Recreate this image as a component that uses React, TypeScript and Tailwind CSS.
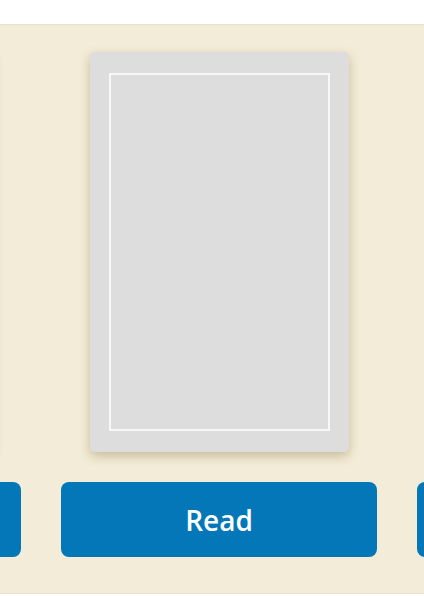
const slides = ["Prev", "Read", "Next"];

function BookSlide({ label }: { label: string }) {
  return (
    <div className="flex w-[316px] shrink-0 flex-col items-center">
      <div className="h-[400px] w-[259px] rounded-[5px] bg-[#dddddd] px-[19px] py-[21px] shadow-[0_4px_11px_rgba(110,85,20,0.32)]">
        <div className="h-full w-full border-2 border-[#f7f7f7]" />
      </div>
      <button
        className="mt-[30px] h-[75px] w-full rounded-[8px] bg-[#0377b7] text-[28px] font-semibold text-white"
        style={{ fontFamily: '"Open Sans", "Noto Sans", sans-serif' }}
      >
        {label === "Read" ? "Read" : ""}
      </button>
    </div>
  );
}

export default function App() {
  return (
    <div className="h-[596px] w-[424px] bg-white pt-6">
      <section className="overflow-hidden border-y border-[#e9e2cc] bg-[#f3ecd8] pt-[27px] pb-[36px]">
        <div className="ml-[-295px] flex gap-10">
          {slides.map((s) => (
            <BookSlide key={s} label={s} />
          ))}
        </div>
      </section>
    </div>
  );
}
